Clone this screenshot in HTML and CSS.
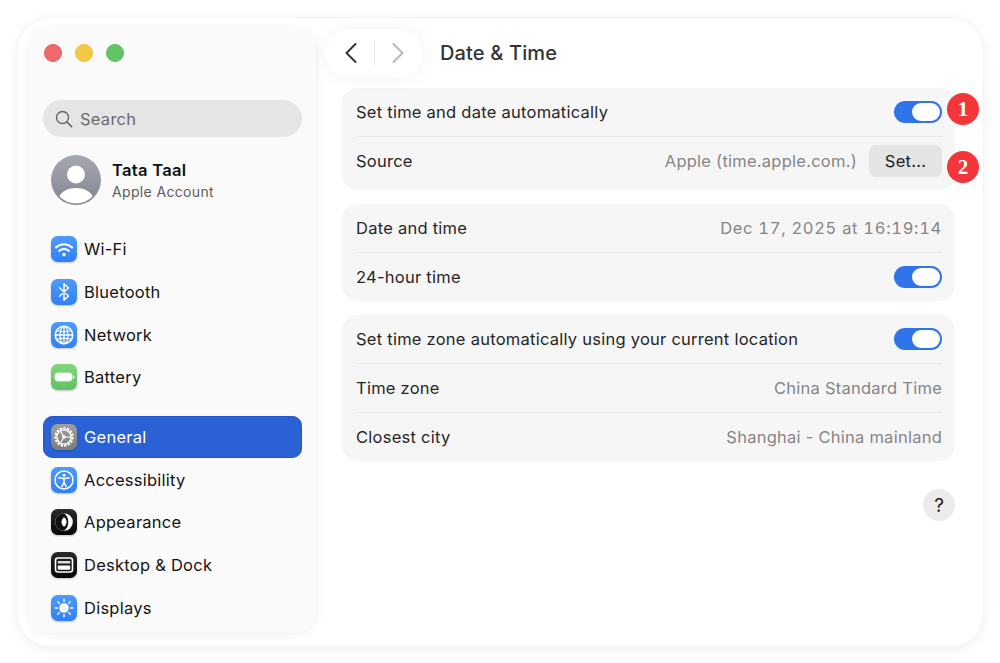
FILE: index.html
```html
<!DOCTYPE html>
<html lang="en">
<head>
<meta charset="utf-8">
<title>Date &amp; Time</title>
<link rel="stylesheet" href="styles.css">
</head>
<body>
<div class="window">
  <aside class="sidebar">
    <div class="lights">
      <span class="light red"></span><span class="light yellow"></span><span class="light green-light"></span>
    </div>
    <div class="search">
      <svg class="search-icon" viewBox="0 0 18 18"><circle cx="7.500" cy="7.500" r="6" fill="none" stroke="#666" stroke-width="1.400"/><path d="M12 12l4.600 4.600" stroke="#666" stroke-width="1.600" stroke-linecap="round"/></svg>
      <span>Search</span>
    </div>
    <div class="account">
      <svg class="avatar" viewBox="0 0 50 50"><defs><linearGradient id="av" x1="0" y1="0" x2="0" y2="1"><stop offset="0" stop-color="#a6a8b3"/><stop offset="1" stop-color="#83858f"/></linearGradient><clipPath id="avc"><circle cx="25" cy="25" r="23.500"/></clipPath></defs><circle cx="25" cy="25" r="25" fill="url(#av)"/><circle cx="25" cy="19.500" r="9" fill="#fff"/><ellipse cx="25" cy="44" rx="17" ry="11" fill="#fff" clip-path="url(#avc)"/></svg>
      <div class="account-text">
        <div class="account-name">Tata Taal</div>
        <div class="account-sub">Apple Account</div>
      </div>
    </div>
    <nav class="nav">
      <div class="nav-item"><span class="icon blue"><svg viewBox="0 0 26 26" fill="none" stroke="#fff" stroke-linecap="round"><path d="M5 11.500a11.500 11.500 0 0 1 16 0" stroke-width="2.200"/><path d="M8.300 14.800a7 7 0 0 1 9.400 0" stroke-width="2.200"/><circle cx="13" cy="18.500" r="1.700" fill="#fff" stroke="none"/></svg></span>Wi-Fi</div>
      <div class="nav-item"><span class="icon blue"><svg viewBox="0 0 26 26" fill="none" stroke="#fff" stroke-width="1.500" stroke-linejoin="round" stroke-linecap="round"><path d="M8.500 8.800l9 8.200-4.500 4.200V4.800l4.500 4.200-9 8.200"/></svg></span>Bluetooth</div>
      <div class="nav-item"><span class="icon blue"><svg viewBox="0 0 26 26" fill="none" stroke="#fff" stroke-width="1.300"><circle cx="13" cy="13" r="8.700" stroke-width="1.600"/><ellipse cx="13" cy="13" rx="4" ry="8.700"/><path d="M13 4.300v17.400M4.300 13h17.400M5.800 8.500q7.200 2.600 14.400 0M5.800 17.500q7.200-2.600 14.400 0"/></svg></span>Network</div>
      <div class="nav-item"><span class="icon battery"><svg viewBox="0 0 26 26"><rect x="4" y="9" width="17" height="8" rx="2.400" fill="#fff" stroke="#dff3da" stroke-width="1"/><rect x="22" y="11.500" width="1.500" height="3" rx=".7" fill="#dff3da"/></svg></span>Battery</div>
      <div class="nav-item active gap-top"><span class="icon gray"><svg viewBox="0 0 26 26" fill="none" stroke="#fff"><circle cx="13" cy="13" r="8.500" stroke-width="2.400" stroke-dasharray="2.400 1.150"/><circle cx="13" cy="13" r="7" stroke-width="1.200"/><path d="M13 13l-3.200-5.500M13 13l-3.200 5.500M13 13h7" stroke-width="1.200"/><circle cx="13" cy="13" r="1.400" stroke-width="1"/></svg></span>General</div>
      <div class="nav-item"><span class="icon blue"><svg viewBox="0 0 26 26" fill="none" stroke="#fff"><circle cx="13" cy="13" r="9" stroke-width="1.500"/><circle cx="13" cy="8.300" r="1.500" fill="#fff" stroke="none"/><path d="M7.800 10.700q5.200 1.500 10.400 0M13 11.500v3.500M13 15l-2.100 4.600M13 15l2.100 4.600" stroke-width="1.500" stroke-linecap="round"/></svg></span>Accessibility</div>
      <div class="nav-item"><span class="icon black"><svg viewBox="0 0 26 26"><circle cx="13" cy="13" r="8.800" fill="#fff"/><path d="M13 4.200a8.800 8.800 0 0 0 0 17.600c3-2.200 4.300-5.300 4.300-8.800S16 6.400 13 4.200z" fill="#111"/><path d="M13 8.200c2 1.200 2.600 3 2.600 4.800s-.6 3.600-2.600 4.800c-1.700-1.200-2.500-3-2.500-4.800s.8-3.600 2.500-4.800z" fill="#fff"/></svg></span>Appearance</div>
      <div class="nav-item"><span class="icon black"><svg viewBox="0 0 26 26"><rect x="4.500" y="6" width="17" height="14" rx="2.500" fill="none" stroke="#fff" stroke-width="1.600"/><rect x="6.800" y="9" width="12.400" height="2.500" fill="#ddd"/><rect x="6.800" y="13.500" width="12.400" height="4.200" rx=".8" fill="#fff"/></svg></span>Desktop &amp; Dock</div>
      <div class="nav-item"><span class="icon blue"><svg viewBox="0 0 26 26" stroke="#fff" stroke-width="1.500" stroke-linecap="round"><circle cx="13" cy="13" r="4.800" fill="#fff" stroke="none"/><path d="M13 4.300v2M13 19.700v2M4.300 13h2M19.700 13h2M6.800 6.800l1.400 1.400M17.800 17.800l1.400 1.400M6.800 19.200l1.400-1.400M17.800 8.200l1.400-1.400"/></svg></span>Displays</div>
    </nav>
  </aside>
  <main class="content">
    <header class="toolbar">
      <div class="nav-pill">
        <svg class="chev" viewBox="0 0 14 22"><path d="M11.500 2L2.500 11l9 9" fill="none" stroke="#333" stroke-width="2" stroke-linecap="round" stroke-linejoin="round"/></svg>
        <span class="pill-sep"></span>
        <svg class="chev" viewBox="0 0 14 22"><path d="M2.500 2l9 9-9 9" fill="none" stroke="#b5b5b5" stroke-width="2" stroke-linecap="round" stroke-linejoin="round"/></svg>
      </div>
      <h1 class="title">Date &amp; Time</h1>
    </header>
    <section class="group group-source">
      <div class="row">
        <span>Set time and date automatically</span>
        <span class="toggle"></span>
        <span class="badge badge-one">1</span>
      </div>
      <div class="row">
        <span>Source</span>
        <span class="right"><span class="value">Apple (time.apple.com.)</span><span class="set-btn">Set...</span></span>
        <span class="badge badge-two">2</span>
      </div>
    </section>
    <section class="group">
      <div class="row"><span>Date and time</span><span class="value value-date">Dec 17, 2025 at 16:19:14</span></div>
      <div class="row"><span>24-hour time</span><span class="toggle"></span></div>
    </section>
    <section class="group">
      <div class="row"><span>Set time zone automatically using your current location</span><span class="toggle"></span></div>
      <div class="row"><span>Time zone</span><span class="value">China Standard Time</span></div>
      <div class="row"><span>Closest city</span><span class="value">Shanghai - China mainland</span></div>
    </section>
    <div class="help-wrap"><span class="help">?</span></div>
  </main>
</div>
</body>
</html>
```
FILE: styles.css
```css
* { box-sizing: border-box; }
html, body { margin: 0; height: 100%; background: #fff; overflow: hidden; }
body {
  padding: 18px 0 0 18px;
  font-family: Inter, "Liberation Sans", sans-serif;
  color: #222;
}
.window {
  width: 965px;
  height: 628px;
  background: #fff;
  border-radius: 32px;
  box-shadow: 0 0 0 1px #f4f4f4, 0 3px 14px rgba(0,0,0,.07);
  display: flex;
  padding: 11px 27px 0 11px;
}
.sidebar {
  width: 287px;
  height: 604px;
  flex: none;
  background: #fafafa;
  border-radius: 22px;
  box-shadow: 0 1px 12px rgba(0,0,0,.07);
  padding: 0 14px;
  overflow: hidden;
}
.lights { display: flex; gap: 13px; height: 71px; padding: 15px 0 0 1px; }
.light { width: 18px; height: 18px; border-radius: 50%; }
.red { background: #ee6a6b; border: 1px solid #e55a5c; }
.yellow { background: #f5c843; border: 1px solid #ecc03a; }
.green-light { background: #63c466; border: 1px solid #58bb5c; }
.search {
  height: 37px;
  border-radius: 18.500px;
  background: #e5e5e5;
  display: flex;
  align-items: center;
  gap: 7px;
  padding-left: 12px;
  font-size: 16.500px;
  letter-spacing: .25px;
  color: #6b6b6b;
}
.search-icon { width: 18px; height: 18px; }
.account { display: flex; align-items: center; gap: 11px; margin: 18px 0 0 8px; height: 50px; }
.avatar { width: 50px; height: 50px; }
.account-name { font-size: 16.500px; font-weight: 600; color: #111; line-height: 22px; letter-spacing: .3px; }
.account-sub { font-size: 14px; color: #5c5c5c; line-height: 21px; letter-spacing: .35px; }
.nav { margin-top: 23px; display: flex; flex-direction: column; }
.nav-item {
  height: 42.700px;
  display: flex;
  align-items: center;
  gap: 7px;
  padding-left: 8px;
  font-size: 16.500px;
  letter-spacing: .25px;
  color: #141414;
  border-radius: 10px;
}
.gap-top { margin-top: 17px; }
.active { background: #2a62d6; color: #fff; height: 42px; box-shadow: inset 0 0 0 1px #2459c9; margin-bottom: .5px; }
.icon {
  width: 26px; height: 26px; flex: none;
  border-radius: 6.500px;
  box-shadow: 0 1px 2px rgba(0,0,0,.22);
  display: block;
}
.icon svg { display: block; width: 26px; height: 26px; }
.blue { background: linear-gradient(#4d9bfb, #3280f3); }
.battery { background: linear-gradient(#82d67b, #5fc160); }
.gray { background: linear-gradient(#a0a0a0, #7c7c7c); }
.black { background: linear-gradient(#2a2a2a, #060606); }
.content { flex: 1; min-width: 0; padding-left: 26px; }
.toolbar { display: flex; align-items: center; gap: 17px; height: 48px; margin: 0 0 11px -16px; }
.nav-pill {
  width: 97px; height: 48px;
  border-radius: 24px;
  background: #fff;
  box-shadow: 0 0 22px rgba(0,0,0,.05);
  display: flex;
  align-items: center;
  justify-content: center;
  gap: 16px;
}
.chev { width: 14px; height: 22px; }
.pill-sep { width: 1px; height: 26px; background: #eaeaea; }
.title { margin: 0; font-size: 20px; font-weight: 500; color: #333; line-height: 50px; letter-spacing: .15px; }
.group {
  width: 613px;
  background: #f6f6f6;
  border-radius: 15px;
  padding: 0 13px 0 14px;
  margin-bottom: 14px;
  font-size: 16.500px;
  letter-spacing: .25px;
  color: #262626;
}
.group-source { padding-bottom: 5px; }
.row {
  position: relative;
  height: 49px;
  display: flex;
  align-items: center;
  justify-content: space-between;
  border-top: 1px solid #e8e8e8;
}
.row:first-child { border-top: 0; height: 48px; }
.right { display: flex; align-items: center; gap: 12px; }
.value { color: #858585; }
.value-date { font-variant-numeric: tabular-nums; letter-spacing: .7px; }
.toggle {
  position: relative;
  width: 48px; height: 22px;
  border-radius: 11px;
  background: #2f74e9;
  display: block;
}
.toggle::after {
  content: "";
  position: absolute;
  top: 2px; right: 2px;
  width: 28px; height: 18px;
  border-radius: 9px;
  background: #fff;
}
.set-btn {
  width: 73px; height: 32px;
  border-radius: 7px;
  background: #e4e4e4;
  color: #222;
  display: flex;
  align-items: center;
  justify-content: center;
}
.badge {
  position: absolute;
  left: 591px;
  width: 32px; height: 32px;
  border-radius: 50%;
  background: #f4353a;
  color: #fff;
  font-family: "Liberation Serif", serif;
  font-size: 21px;
  font-weight: 700;
  letter-spacing: 0;
  display: flex;
  align-items: center;
  justify-content: center;
}
.badge-one { top: 5px; }
.badge-two { top: 14px; }
.help-wrap { display: flex; justify-content: flex-end; width: 613px; margin-top: 28px; }
.help {
  width: 32px; height: 32px;
  border-radius: 50%;
  background: #ebebeb;
  color: #222;
  font-size: 19px;
  display: flex;
  align-items: center;
  justify-content: center;
}
```
